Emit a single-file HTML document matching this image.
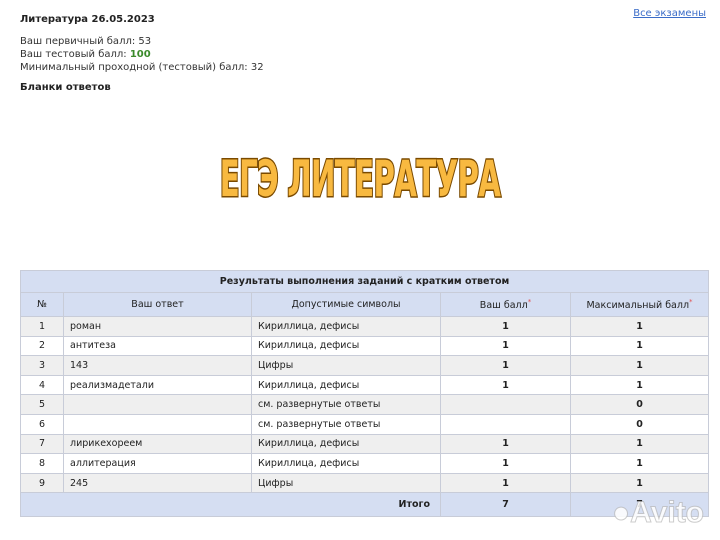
<!DOCTYPE html>
<html><head><meta charset="utf-8"><style>
body{margin:0;width:720px;height:540px;background:#fff;font-family:"DejaVu Sans","Liberation Sans",sans-serif;color:#222;position:relative;overflow:hidden}
.t{position:absolute;left:20px;font-size:10px}
a{position:absolute;right:14px;top:8px;font-size:10px;color:#3a6cc8;text-decoration:underline}
.big{position:absolute;left:0;width:720px;top:151px;text-align:center;font-family:"Liberation Sans Narrow","DejaVu Sans Condensed",sans-serif;font-weight:bold;font-size:50px;line-height:56px;color:#f8b940;-webkit-text-stroke:3px #7a4a00;paint-order:stroke fill;letter-spacing:-1px;transform:scaleX(.65)}
table{position:absolute;left:20px;top:270px;width:688px;border-collapse:collapse;font-size:9.5px;table-layout:fixed}
td,th{border:1px solid #c8ccd8;padding:0 6px;height:18.6px;font-weight:normal;white-space:nowrap}
th{background:#d5def2}
tr.h th{height:23px}
tr.ti th{height:21px;font-weight:bold}
tbody tr:nth-child(odd) td{background:#efefef}
tbody tr:nth-child(even) td{background:#fff}
.c{text-align:center}.b{font-weight:bold;text-align:center}
sup{color:#e05050;font-size:7px}
tr.tot td{background:#d5def2!important;height:23px}
</style></head><body>
<div class="t" style="top:14px;font-weight:bold">Литература 26.05.2023</div>
<div class="t" style="top:35px;line-height:13px;color:#333">Ваш первичный балл: 53<br>Ваш тестовый балл: <b style="color:#3a8a2a">100</b><br>Минимальный проходной (тестовый) балл: 32</div>
<div class="t" style="top:82px;font-weight:bold">Бланки ответов</div>
<a>Все экзамены</a>
<div class="big">ЕГЭ ЛИТЕРАТУРА</div>
<table>
<colgroup><col style="width:43px"><col style="width:188px"><col style="width:189px"><col style="width:130px"><col style="width:138px"></colgroup>
<thead><tr class="ti"><th colspan="5">Результаты выполнения заданий с кратким ответом</th></tr>
<tr class="h"><th>№</th><th>Ваш ответ</th><th>Допустимые символы</th><th>Ваш балл<sup>*</sup></th><th>Максимальный балл<sup>*</sup></th></tr></thead>
<tbody>
<tr><td class="c">1</td><td>роман</td><td>Кириллица, дефисы</td><td class="b">1</td><td class="b">1</td></tr>
<tr><td class="c">2</td><td>антитеза</td><td>Кириллица, дефисы</td><td class="b">1</td><td class="b">1</td></tr>
<tr><td class="c">3</td><td>143</td><td>Цифры</td><td class="b">1</td><td class="b">1</td></tr>
<tr><td class="c">4</td><td>реализмадетали</td><td>Кириллица, дефисы</td><td class="b">1</td><td class="b">1</td></tr>
<tr><td class="c">5</td><td></td><td>см. развернутые ответы</td><td></td><td class="b">0</td></tr>
<tr><td class="c">6</td><td></td><td>см. развернутые ответы</td><td></td><td class="b">0</td></tr>
<tr><td class="c">7</td><td>лирикехореем</td><td>Кириллица, дефисы</td><td class="b">1</td><td class="b">1</td></tr>
<tr><td class="c">8</td><td>аллитерация</td><td>Кириллица, дефисы</td><td class="b">1</td><td class="b">1</td></tr>
<tr><td class="c">9</td><td>245</td><td>Цифры</td><td class="b">1</td><td class="b">1</td></tr>
<tr class="tot"><td colspan="3" style="text-align:right;font-weight:bold;padding-right:10px">Итого</td><td class="b">7</td><td class="b">7</td></tr>
</tbody></table>
<div style="position:absolute;left:612px;top:496px;font-size:30px;font-weight:bold;color:rgba(255,255,255,.85);-webkit-text-stroke:1px rgba(170,170,170,.6);font-family:'Liberation Sans',sans-serif">●Avito</div>
</body></html>
